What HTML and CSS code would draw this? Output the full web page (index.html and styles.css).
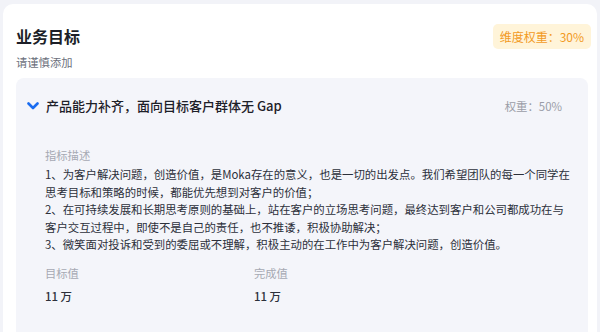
FILE: index.html
```html
<!DOCTYPE html>
<html lang="zh-CN">
<head>
<meta charset="utf-8">
<link rel="stylesheet" href="styles.css">
</head>
<body>
<div class="card">
  <div class="card-head">
    <div class="titles">
      <div class="title">业务目标</div>
      <div class="subtitle">请谨慎添加</div>
    </div>
    <div class="badge">维度权重：30%</div>
  </div>
  <div class="panel">
    <div class="panel-head">
      <svg class="chev" width="12" height="8" viewBox="0 0 12 8"><polyline points="1.5,1.5 6,6 10.5,1.5" fill="none" stroke="#1a6cf0" stroke-width="2.6" stroke-linecap="round" stroke-linejoin="round"/></svg>
      <div class="panel-title">产品能力补齐，面向目标客户群体无 Gap</div>
      <div class="weight">权重：50%</div>
    </div>
    <div class="panel-body">
      <div class="label">指标描述</div>
      <div class="desc">
        <p>1、为客户解决问题，创造价值，是Moka存在的意义，也是一切的出发点。我们希望团队的每一个同学在思考目标和策略的时候，都能优先想到对客户的价值；</p>
        <p>2、在可持续发展和长期思考原则的基础上，站在客户的立场思考问题，最终达到客户和公司都成功在与客户交互过程中，即使不是自己的责任，也不推诿，积极协助解决；</p>
        <p>3、微笑面对投诉和受到的委屈或不理解，积极主动的在工作中为客户解决问题，创造价值。</p>
      </div>
      <div class="values">
        <div class="val-col">
          <div class="label">目标值</div>
          <div class="val">11 万</div>
        </div>
        <div class="val-col">
          <div class="label">完成值</div>
          <div class="val">11 万</div>
        </div>
      </div>
    </div>
  </div>
</div>
</body>
</html>
```

FILE: styles.css
```css
html, body {
  margin: 0;
  padding: 0;
  background: #f2f3f8;
  font-family: "Noto Sans CJK SC", "Noto Sans", sans-serif;
  height: 332px;
  overflow: hidden;
}
.card {
  margin: 4px 3px 0 3px;
  background: #ffffff;
  border-radius: 10px 10px 0 0;
  padding: 20px 9px 0 13px;
  height: 328px;
  box-sizing: border-box;
  display: flex;
  flex-direction: column;
}
.card-head {
  display: flex;
  justify-content: space-between;
  align-items: flex-start;
}
.title {
  font-size: 16px;
  line-height: 24px;
  font-weight: 700;
  color: #1c1f28;
}
.subtitle {
  margin-top: 6px;
  font-size: 11.3px;
  line-height: 16px;
  color: #6b6f7b;
}
.badge {
  margin-right: -3px;
  height: 25px;
  line-height: 25px;
  padding: 0 7px;
  border-radius: 5px;
  background: #fff4d9;
  color: #f29a1f;
  font-size: 12px;
}
.panel {
  margin-top: 8px;
  background: #f4f5fa;
  border-radius: 8px 8px 0 0;
  flex: 1;
}
.panel-head {
  display: flex;
  align-items: center;
  padding: 18px 26px 0 11px;
  height: 20px;
  box-sizing: content-box;
}
.chev {
  display: block;
  margin-right: 7px;
  flex: none;
}
.panel-title {
  flex: 1;
  font-size: 13px;
  line-height: 20px;
  color: #1d2028;
  font-weight: 500;
}
.weight {
  font-size: 11.4px;
  color: #9a9da7;
}
.panel-body {
  padding: 31px 0 0 29px;
}
.label {
  font-size: 11.3px;
  line-height: 16px;
  color: #a6a9b3;
}
.desc {
  margin-top: 3px;
  width: 528px;
  font-size: 11.4px;
  line-height: 17.6px;
  color: #2c303a;
}
.desc p {
  margin: 0;
}
.values {
  display: flex;
  margin-top: 11px;
}
.val-col {
  width: 209px;
}
.val {
  margin-top: 6px;
  font-size: 11.4px;
  line-height: 18px;
  color: #2c303a;
  font-weight: 500;
}
```
